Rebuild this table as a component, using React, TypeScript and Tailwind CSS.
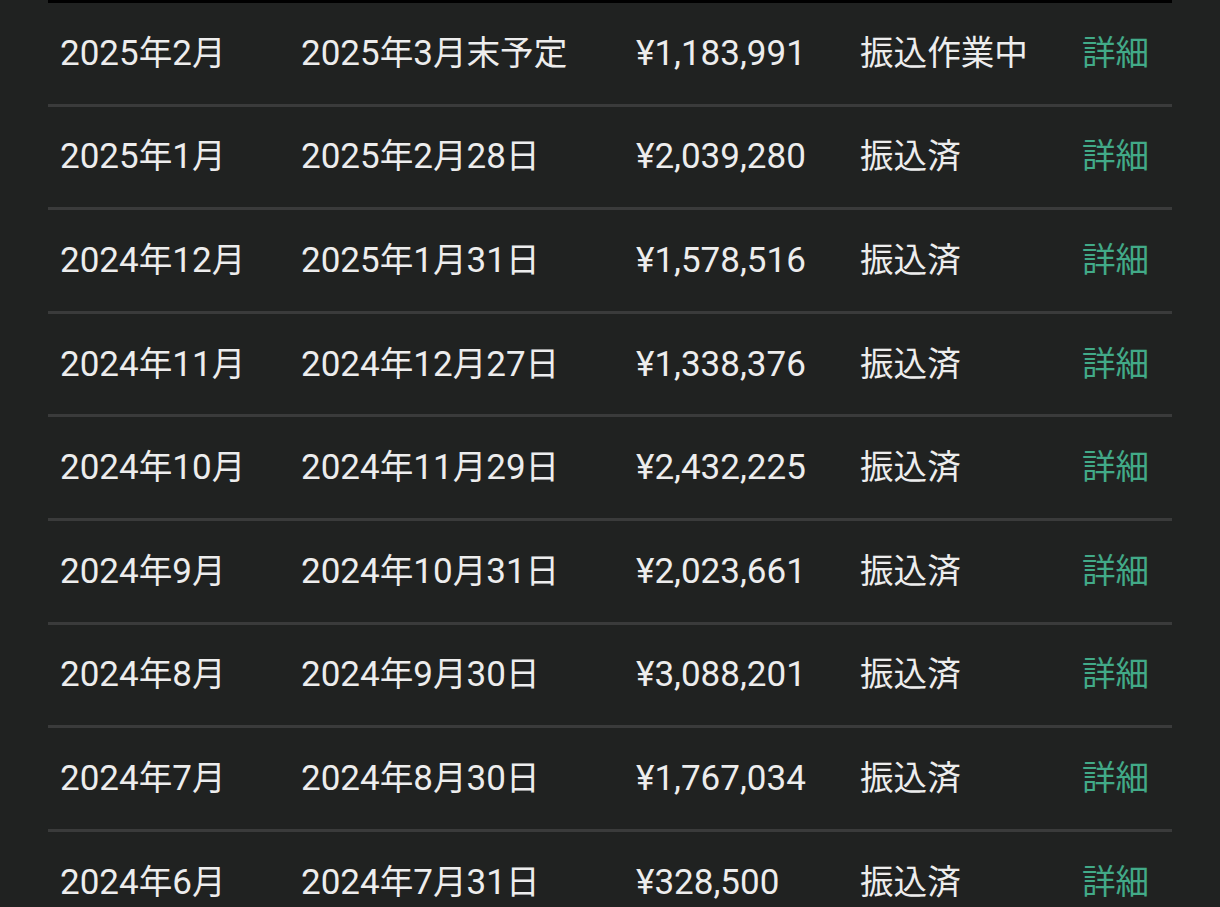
import React from "react";

const rows = [
  ["2025年2月", "2025年3月末予定", "¥1,183,991", "振込作業中"],
  ["2025年1月", "2025年2月28日", "¥2,039,280", "振込済"],
  ["2024年12月", "2025年1月31日", "¥1,578,516", "振込済"],
  ["2024年11月", "2024年12月27日", "¥1,338,376", "振込済"],
  ["2024年10月", "2024年11月29日", "¥2,432,225", "振込済"],
  ["2024年9月", "2024年10月31日", "¥2,023,661", "振込済"],
  ["2024年8月", "2024年9月30日", "¥3,088,201", "振込済"],
  ["2024年7月", "2024年8月30日", "¥1,767,034", "振込済"],
  ["2024年6月", "2024年7月31日", "¥328,500", "振込済"],
];

function T({ s }: { s: string }) {
  const parts = s.split(/([\u3000-\u9fff]+)/).filter((p) => p.length > 0);
  return (
    <>
      {parts.map((p, i) =>
        /[\u3000-\u9fff]/.test(p) ? (
          <span key={i} className="text-[33.6px]">
            {p}
          </span>
        ) : (
          <span key={i}>{p}</span>
        )
      )}
    </>
  );
}

export default function App() {
  return (
    <div
      className="w-[1220px] h-[907px] overflow-hidden bg-[#202221] text-[#ededed]"
      style={{ fontFamily: 'Roboto, "Noto Sans CJK JP", sans-serif' }}
    >
      <div className="ml-[48px] w-[1124px] border-t-[3px] border-black">
        {rows.map((r, i) => (
          <div
            key={i}
            className="grid grid-cols-[241px_335px_224px_222px_1fr] items-center h-[103.6px] pl-[12px] border-b-[3px] border-[#3a3b3b] text-[35px] leading-none"
          >
            <div><T s={r[0]} /></div>
            <div><T s={r[1]} /></div>
            <div><T s={r[2]} /></div>
            <div><T s={r[3]} /></div>
            <div className="text-[#42aa88]"><T s="詳細" /></div>
          </div>
        ))}
      </div>
    </div>
  );
}
